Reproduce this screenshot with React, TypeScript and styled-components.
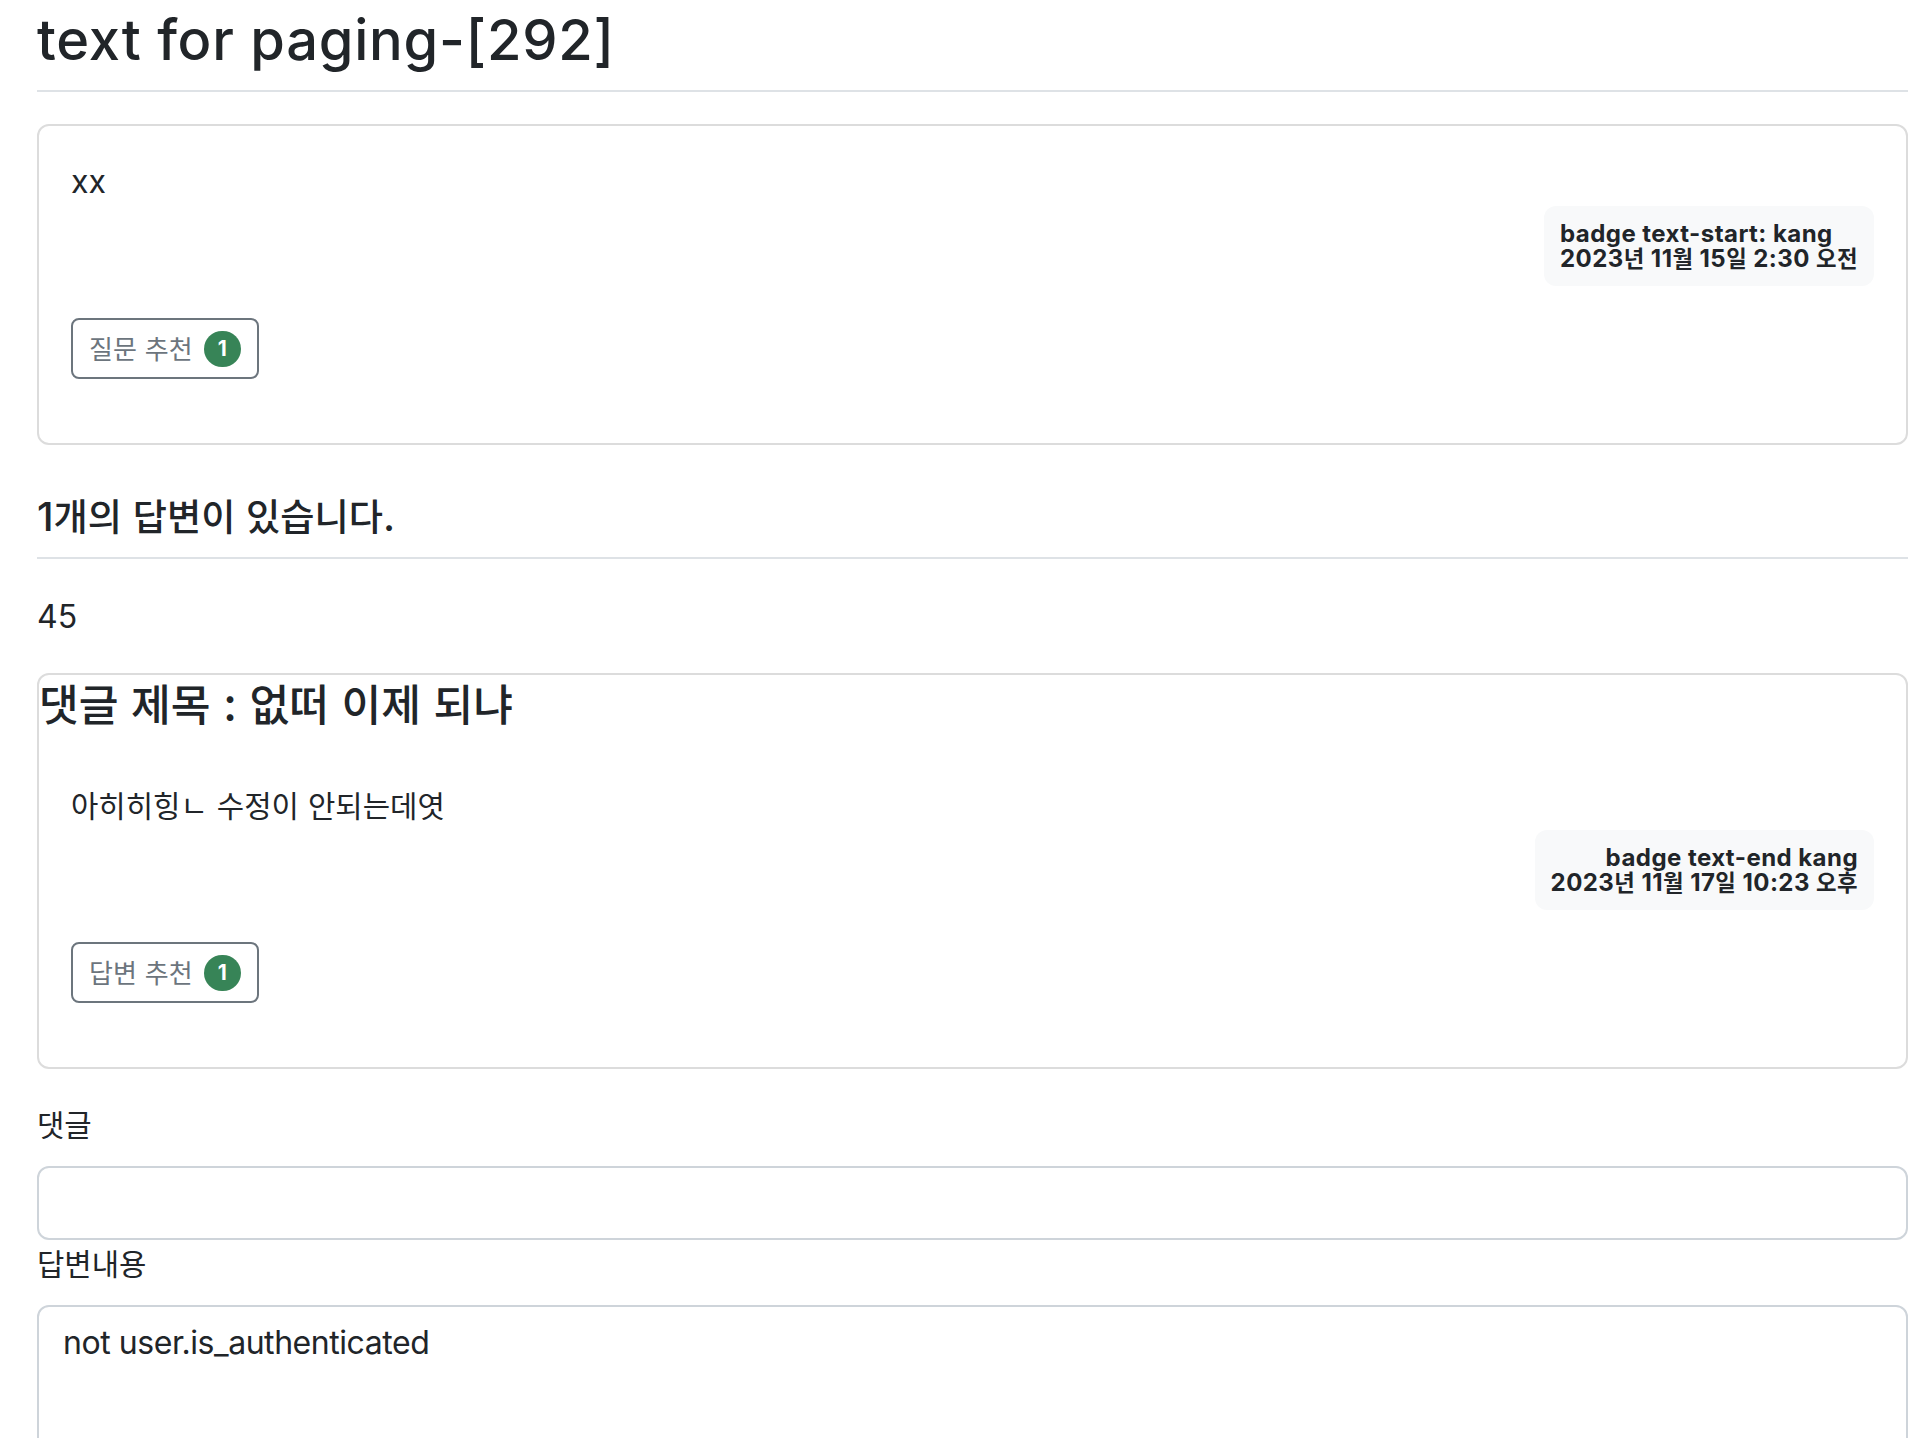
import styled, { createGlobalStyle } from 'styled-components'

// Hangul glyphs in Noto CJK are wider/taller than the reference font, so runs get scaled down
const HANGUL = /([\u3131-\u318E\uAC00-\uD7A3]+)/

const ko = (text: string) =>
  text.split(HANGUL).map((part, i) =>
    HANGUL.test(part) ? <Ko key={i}>{part}</Ko> : part
  )

const answers = [
  {
    id: 45,
    subject: '댓글 제목 : 없떠 이제 되냐',
    content: '아히히힝ㄴ 수정이 안되는데엿',
    author: 'badge text-end kang',
    date: '2023년 11월 17일 10:23 오후',
    voters: 1,
  },
]

const App = () => {
  return (
    <>
      <GlobalStyle />
      <Page>
        <Title>text for paging-[292]</Title>

        <Card>
          <CardBody>
            <CardText>xx</CardText>
            <BadgeRow>
              <InfoBadge $align="left">
                <div>badge text-start: kang</div>
                <div>{ko('2023년 11월 15일 2:30 오전')}</div>
              </InfoBadge>
            </BadgeRow>
            <ButtonRow>
              <VoteButton>
                <span>{ko('질문 추천')}</span>
                <Pill>1</Pill>
              </VoteButton>
            </ButtonRow>
          </CardBody>
        </Card>

        <AnswerCount>{ko(`${answers.length}개의 답변이 있습니다.`)}</AnswerCount>

        {answers.map((a) => (
          <div key={a.id}>
            <AnchorText>{a.id}</AnchorText>
            <Card>
              <CardTitle>{ko(a.subject)}</CardTitle>
              <CardBody>
                <CardText>{ko(a.content)}</CardText>
                <BadgeRow>
                  <InfoBadge $align="right">
                    <div>{a.author}</div>
                    <div>{ko(a.date)}</div>
                  </InfoBadge>
                </BadgeRow>
                <ButtonRow>
                  <VoteButton>
                    <span>{ko('답변 추천')}</span>
                    <Pill>{a.voters}</Pill>
                  </VoteButton>
                </ButtonRow>
              </CardBody>
            </Card>
          </div>
        ))}

        <Form>
          <Label htmlFor="subject">{ko('댓글')}</Label>
          <Input id="subject" type="text" />
          <Label htmlFor="content">{ko('답변내용')}</Label>
          <TextArea id="content" defaultValue="not user.is_authenticated" />
        </Form>
      </Page>
    </>
  )
}

const GlobalStyle = createGlobalStyle`
  * { box-sizing: border-box; }
  body {
    margin: 0;
    background: #fff;
    color: #212529;
    font-family: Inter, "Noto Sans CJK KR", sans-serif;
  }
`
const Ko = styled.span`
  font-family: "Noto Sans CJK KR", sans-serif;
  font-size: 0.93em;
  line-height: 1;
`
const Page = styled.div`
  padding: 0 24px 0 37px;
`
const Title = styled.h2`
  margin: 7px 0 0;
  padding-bottom: 16px;
  border-bottom: 2px solid #dee2e6;
  font-size: 56px;
  font-weight: 500;
  line-height: 1.2;
  letter-spacing: 0.75px;
`
const Card = styled.div`
  margin: 32px 0;
  border: 2px solid #dcdcdc;
  border-radius: 12px;
`
const CardTitle = styled.h3`
  margin: 0 0 16px;
  font-size: 46.5px;
  font-weight: 500;
  line-height: 59px;
`
const CardBody = styled.div`
  padding: 32px;
`
const CardText = styled.p`
  margin: 0;
  font-size: 32px;
  line-height: 48px;
  white-space: pre-line;
`
const BadgeRow = styled.div`
  display: flex;
  justify-content: flex-end;
`
const InfoBadge = styled.div<{ $align: 'left' | 'right' }>`
  padding: 15px 16px;
  background: #f8f9fa;
  border-radius: 12px;
  font-size: 24px;
  font-weight: 700;
  line-height: 25px;
  letter-spacing: 0.45px;
  text-align: ${(p) => p.$align};
`
const ButtonRow = styled.div`
  margin: 32px 0;
`
const VoteButton = styled.button`
  display: inline-flex;
  align-items: center;
  height: 61px;
  padding: 0 16px;
  border: 2px solid #6c757d;
  border-radius: 8px;
  background: #fff;
  color: #6c757d;
  font-family: inherit;
  font-size: 28px;
  line-height: 42px;
`
const Pill = styled.span`
  display: inline-flex;
  align-items: center;
  justify-content: center;
  min-width: 37px;
  height: 36px;
  margin-left: 11px;
  padding: 0 13px;
  border-radius: 999px;
  background: #378457;
  color: #fff;
  font-size: 21px;
  font-weight: 700;
`
const AnswerCount = styled.h5`
  margin: 32px 0;
  padding: 16px 0;
  border-bottom: 2px solid #dee2e6;
  font-size: 40px;
  font-weight: 500;
  line-height: 48px;
`
const AnchorText = styled.p`
  margin: 34px 0 16px;
  font-size: 32px;
  line-height: 48px;
`
const Form = styled.form`
  margin-top: 30px;
`
const Label = styled.label`
  display: block;
  margin-bottom: 17px;
  font-size: 32px;
  line-height: 48px;
`
const Input = styled.input`
  display: block;
  width: 100%;
  height: 74px;
  padding: 12px 24px;
  border: 2px solid #ced4da;
  border-radius: 12px;
  font-family: inherit;
  font-size: 32px;
  color: #212529;
`
const TextArea = styled.textarea`
  display: block;
  width: 100%;
  height: 420px;
  padding: 12px 24px;
  border: 2px solid #ced4da;
  border-radius: 12px;
  font-family: inherit;
  font-size: 32px;
  line-height: 48px;
  letter-spacing: -0.45px;
  color: #212529;
  resize: none;
`

export default App
